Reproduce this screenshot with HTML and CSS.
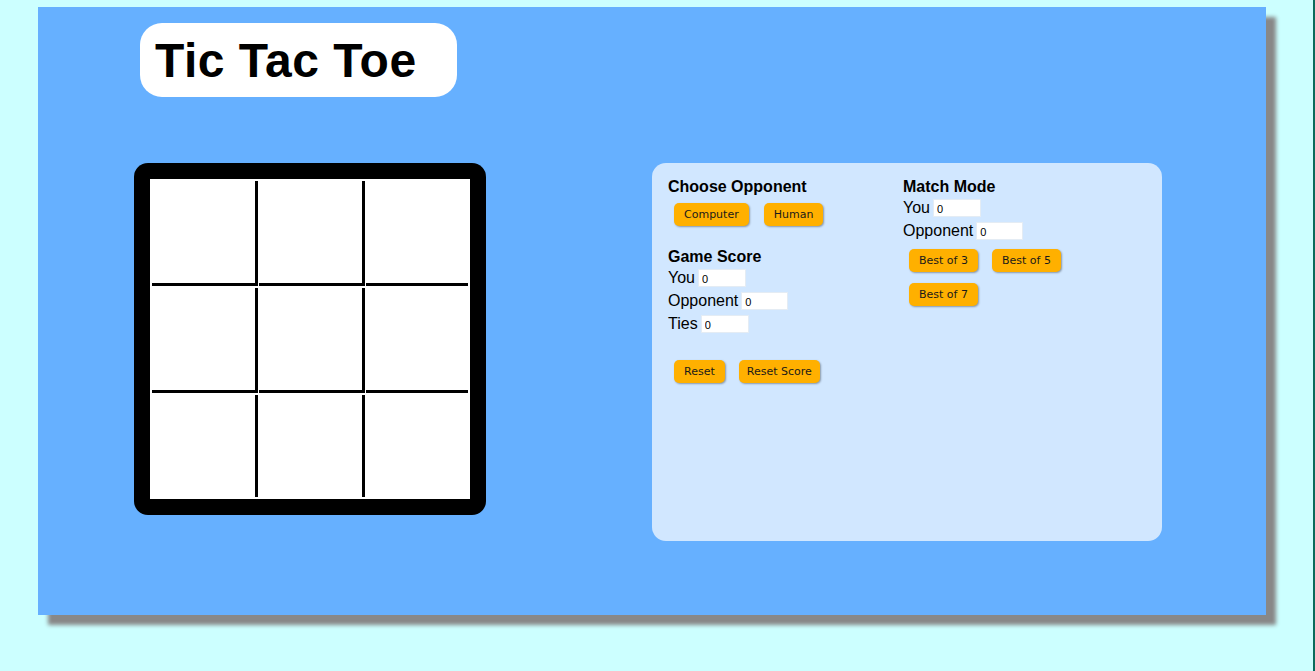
FILE: index.html
```html
<!DOCTYPE html>
<html>
<head>
<meta charset="utf-8">
<title>Tic Tac Toe</title>
<link rel="stylesheet" href="styles.css">
</head>
<body>
<div class="page">
  <div class="header">
    <h1 class="title">Tic Tac Toe</h1>
  </div>
  <div class="main">
    <div class="board">
      <div class="grid">
        <div class="cell br bb"></div>
        <div class="cell br bb"></div>
        <div class="cell bb"></div>
        <div class="cell br bb"></div>
        <div class="cell br bb"></div>
        <div class="cell bb"></div>
        <div class="cell br"></div>
        <div class="cell br"></div>
        <div class="cell"></div>
      </div>
    </div>
    <div class="panel">
      <div class="col col-left">
        <h2 class="heading">Choose Opponent</h2>
        <div class="btns">
          <button class="btn">Computer</button>
          <button class="btn">Human</button>
        </div>
        <h2 class="heading score-heading">Game Score</h2>
        <div class="row"><span>You</span><input class="field" type="text" value="0"></div>
        <div class="row"><span>Opponent</span><input class="field w47" type="text" value="0"></div>
        <div class="row"><span>Ties</span><input class="field" type="text" value="0"></div>
        <div class="btns reset-btns">
          <button class="btn">Reset</button>
          <button class="btn">Reset Score</button>
        </div>
      </div>
      <div class="col col-right">
        <h2 class="heading">Match Mode</h2>
        <div class="row"><span>You</span><input class="field" type="text" value="0"></div>
        <div class="row"><span>Opponent</span><input class="field w47" type="text" value="0"></div>
        <div class="btns best-btns">
          <button class="btn">Best of 3</button>
          <button class="btn">Best of 5</button>
        </div>
        <div class="btns best-btns2">
          <button class="btn">Best of 7</button>
        </div>
      </div>
    </div>
  </div>
</div>
</body>
</html>
```

FILE: styles.css
```css
html {
  background: #ccffff;
}

body {
  margin: 0;
  height: 100vh;
  box-sizing: border-box;
  padding: 7px 0 0 38px;
  border-right: 2px solid #0b6b5c;
  background: #ccffff;
  overflow: hidden;
  font-family: "Liberation Sans", Arial, sans-serif;
}

.page {
  width: 1228px;
  height: 608px;
  background: #66b0ff;
  box-shadow: 10px 10px 4px #888888;
  box-sizing: border-box;
  padding-top: 16px;
}

.header {
  display: flex;
  padding-left: 102px;
}

.title {
  margin: 0;
  width: 317px;
  height: 74px;
  box-sizing: border-box;
  background: #ffffff;
  border-radius: 22px;
  padding: 10px 0 0 15px;
  font-size: 48px;
  font-weight: bold;
  line-height: 55px;
  letter-spacing: 0.5px;
  color: #000;
}

.main {
  display: flex;
  align-items: flex-start;
  margin-top: 66px;
  padding-left: 96px;
}

.board {
  width: 352px;
  height: 352px;
  box-sizing: border-box;
  background: #000;
  border-radius: 14px;
  padding: 16px;
}

.grid {
  width: 320px;
  height: 320px;
  box-sizing: border-box;
  background: #fff;
  padding: 2px;
  display: grid;
  grid-template-columns: 106px 106px 102px;
  grid-template-rows: 105px 105px 102px;
  column-gap: 1px;
  row-gap: 2px;
}

.cell {
  box-sizing: border-box;
  background: #fff;
}

.br { border-right: 3px solid #000; }
.bb { border-bottom: 3px solid #000; }

.panel {
  margin-left: 166px;
  width: 510px;
  height: 378px;
  box-sizing: border-box;
  background: #d1e7ff;
  border-radius: 14px;
  padding: 15px 16px;
  display: flex;
}

.col-left { width: 235px; }
.col-right { flex: 1; }

.heading {
  margin: 0;
  font-size: 16px;
  font-weight: bold;
  line-height: 18px;
  color: #000;
}

.score-heading { margin-top: 22px; }

.row {
  display: flex;
  align-items: center;
  gap: 3px;
  height: 23px;
  font-size: 16px;
  color: #000;
}

.field {
  width: 48px;
  height: 18px;
  box-sizing: border-box;
  border: 1px solid #e4ecf4;
  background: #fff;
  padding: 2px 3px 0;
  margin: 0;
  font-family: "Liberation Sans", Arial, sans-serif;
  font-size: 11px;
  color: #000;
  outline: none;
}

.w47 { width: 47px; }

.btns {
  display: flex;
  gap: 15px;
  padding-left: 6px;
  margin-top: 7px;
}

.reset-btns { margin-top: 25px; gap: 14px; }
.best-btns { margin-top: 7px; gap: 14px; }
.best-btns2 { margin-top: 11px; }

.btn {
  height: 23px;
  box-sizing: border-box;
  padding: 0 10px;
  margin: 0;
  border: none;
  border-radius: 5px;
  background: #ffb000;
  box-shadow: 1px 1px 2px rgba(0, 0, 0, 0.35);
  font-family: "DejaVu Sans", Verdana, sans-serif;
  font-size: 11px;
  color: #1a1a1a;
  line-height: 23px;
}

.reset-btns .btn + .btn { padding: 0 8px; }
```
